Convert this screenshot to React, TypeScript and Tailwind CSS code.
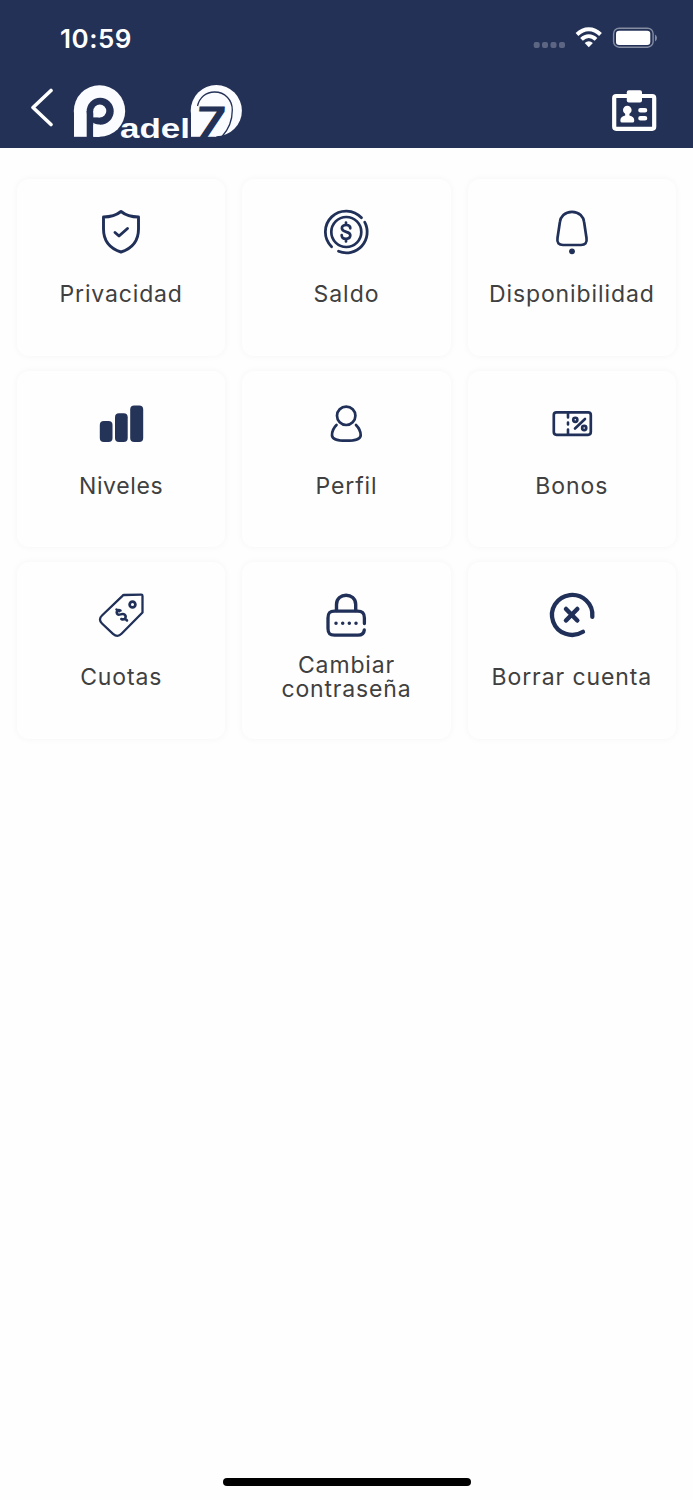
import type { ReactNode } from "react";

const Icon = ({ children }: { children: ReactNode }) => (
  <svg
    width="60"
    height="60"
    viewBox="0 0 60 60"
    fill="none"
    stroke="#203058"
    strokeWidth="2.9"
    strokeLinecap="round"
    strokeLinejoin="round"
  >
    {children}
  </svg>
);

const items: { lines: string[]; spacing: string; icon: ReactNode }[] = [
  {
    lines: ["Privacidad"],
    spacing: "tracking-[0.85px]",
    icon: (
      <>
        <path d="M30 10.5C25 14.5 20 16 12.5 16V28C12.5 39.500 19 47.500 30 51C41 47.500 47.500 39.500 47.500 28V16C40 16 35 14.500 30 10.500Z" />
        <path d="M24 31.500L28 35L36.500 27.500" />
      </>
    ),
  },
  {
    lines: ["Saldo"],
    spacing: "tracking-[1px]",
    icon: (
      <>
        <circle cx="30.300" cy="31" r="15" strokeWidth="2.700" />
        <path d="M15.600 45.700A20.800 20.800 0 1 1 45.500 16.800M48.700 21.200A20.800 20.800 0 0 1 22.500 50.300" strokeWidth="2.800" />
        <path d="M34.300 27.300C34.300 24.800 32.600 24 30.300 24C27.500 24 25.900 25 25.900 27.300C25.900 32.200 34.300 29.500 34.300 34.300C34.300 36.700 32.500 37.800 30 37.800C27.300 37.800 25.700 36.500 25.700 34.200M30 21.500V23.500M30 38V40.500" strokeWidth="2.700" />
      </>
    ),
  },
  {
    lines: ["Disponibilidad"],
    spacing: "tracking-[0.9px]",
    icon: (
      <>
        <path d="M30 10.800C22.500 10.800 18.500 16 17.900 21L15.500 37C14.700 42 17 44 21 44H39C43 44 45.300 42 44.500 37L42.100 21C41.500 16 37.500 10.800 30 10.800Z" strokeWidth="2.700" />
        <circle cx="30" cy="50.300" r="2.900" fill="#203058" stroke="none" />
      </>
    ),
  },
  {
    lines: ["Niveles"],
    spacing: "tracking-[0.65px]",
    icon: (
      <g fill="#243358" stroke="none">
        <rect x="8.800" y="28" width="12.700" height="21" rx="4" />
        <rect x="24" y="20.200" width="12.700" height="28.800" rx="4" />
        <rect x="39.200" y="12.500" width="13" height="36.500" rx="4" />
      </g>
    ),
  },
  {
    lines: ["Perfil"],
    spacing: "tracking-[0.9px]",
    icon: (
      <>
        <circle cx="30.200" cy="22.800" r="9.200" strokeWidth="2.700" />
        <path d="M20.500 32C17.400 35 16 38 16 42.200C16 46 22 47.700 30.200 47.700S44.700 46 44.700 42.200C44.700 38 43 35 40 32" strokeWidth="2.700" />
      </>
    ),
  },
  {
    lines: ["Bonos"],
    spacing: "tracking-[1px]",
    icon: (
      <>
        <rect x="11.800" y="19.300" width="37" height="22.500" rx="2.700" strokeWidth="2.700" />
        <path d="M26 20V24.500M26 29.500V31.500M26 36.500V41.500M33 35.500L43 26" strokeWidth="2.600" />
        <circle cx="33.300" cy="26.800" r="2.100" strokeWidth="2.600" />
        <circle cx="42.200" cy="35" r="2.100" strokeWidth="2.600" />
      </>
    ),
  },
  {
    lines: ["Cuotas"],
    spacing: "tracking-[0.85px]",
    icon: (
      <>
        <path d="M33 11L50.300 10.700C51.100 10.700 51.500 11.100 51.500 12V28.500L30.500 49.800C28 52.300 24.700 52.300 22 49.800L11 39.500C8.300 37 8.300 34 11 31.500L31.500 11.800Q32.200 11 33 11Z" strokeWidth="2.300" />
        <circle cx="41.500" cy="20.500" r="2.900" strokeWidth="2.700" />
        <path d="M29.500 26.500C27 25 25 27.500 26 29.700C27.500 32.500 31 28.500 33.500 30.500C36 32.500 34 36.500 30.300 35M28 27.200L25.500 25.500M34 34.500L36 36.500" strokeWidth="2.500" />
      </>
    ),
  },
  {
    lines: ["Cambiar", "contraseña"],
    spacing: "tracking-[0.85px]",
    icon: (
      <>
        <path d="M20.500 26.500V20.500C20.500 8.200 39.700 8.200 39.700 20.500V26.500" strokeWidth="3.400" />
        <path d="M48.400 39.500V34C48.400 29 46.500 27.200 41.500 27.200H18.500C13.500 27.200 12 29 12 34V44.500C12 49.500 13.500 51.200 18.500 51.200H42C46 51.200 48 49.500 48.300 46" strokeWidth="3.300" />
        <path d="M20 39.300h.01M26.700 39.300h.01M33.300 39.300h.01M40 39.300h.01" strokeWidth="3.500" />
      </>
    ),
  },
  {
    lines: ["Borrar cuenta"],
    spacing: "tracking-[0.9px]",
    icon: (
      <>
        <path d="M50.300 32.800A20.200 20 0 1 0 41 47.800" strokeWidth="4.300" />
        <path d="M24 25L35.300 36.500M35.300 25L24 36.500" strokeWidth="4.500" />
      </>
    ),
  },
];

const Logo = () => (
  <svg width="172" height="58" viewBox="72 83 172 58" className="overflow-visible">
    <circle cx="99.500" cy="111" r="25.700" fill="#fafcff" />
    <rect x="74" y="111" width="25" height="25.800" fill="#fafcff" />
    <circle cx="100.200" cy="111.200" r="13.500" fill="#243156" />
    <rect x="86.700" y="111" width="6.600" height="26" fill="#243156" />
    <circle cx="99.800" cy="111" r="6.500" fill="#fafcff" />
    <rect x="93.300" y="111" width="6.500" height="6.400" fill="#fafcff" />
    <rect x="93.300" y="124.700" width="6.500" height="12" fill="#fafcff" />
    <circle cx="216.300" cy="110.700" r="25.600" fill="#fafcff" />
    <rect x="191" y="110.700" width="25.300" height="26.100" fill="#fafcff" />
    <path
      d="M197.500 106C199.500 97.500 206 92 214.500 92C225 92 232.300 100 232.300 110C232.300 121 228 130 222 136.500"
      fill="none"
      stroke="#243156"
      strokeWidth="1.300"
    />
    <text
      x="120"
      y="137.800"
      fill="#fafcff"
      stroke="#243156"
      strokeWidth="1.600"
      paintOrder="stroke"
      fontFamily="Liberation Sans, sans-serif"
      fontWeight="700"
      fontSize="28.500"
      textLength="70"
      lengthAdjust="spacingAndGlyphs"
    >
      adel
    </text>
    <text
      transform="translate(195.500 137) skewX(-4)"
      fill="#243156"
      fontFamily="Inter, sans-serif"
      fontWeight="700"
      fontSize="42"
      textLength="29"
      lengthAdjust="spacingAndGlyphs"
    >
      7
    </text>
  </svg>
);

export default function App() {
  return (
    <div className="flex h-[1500px] w-[693px] flex-col bg-[#fefefe] font-[Inter,sans-serif]">
      <header className="h-[148px] bg-[#243156]">
        <div className="flex h-[75px] items-center justify-between pt-px pr-[35px] pl-[60px]">
          <span className="pt-px text-[26px] leading-none font-semibold tracking-[0.5px] text-white">10:59</span>
          <svg width="126" height="24" viewBox="532 26 126 24" fill="none">
            <g fill="#5c6683">
              <rect x="533.700" y="42" width="6" height="6" rx="2" />
              <rect x="542" y="42" width="6" height="6" rx="2" />
              <rect x="550.500" y="42" width="6" height="6" rx="2" />
              <rect x="559" y="42" width="6" height="6" rx="2" />
            </g>
            <path d="M577 34.500C584 27.500 593.500 27.500 600.500 34.500M581.500 39.300C586 35 591.500 35 596 39.300" stroke="#fff" strokeWidth="3.900" />
            <path d="M584.700 43Q588.800 39.500 592.900 43L588.800 47.300Z" fill="#fff" />
            <rect x="613.600" y="28.200" width="39.500" height="19" rx="5.500" stroke="#858da2" strokeWidth="1.400" />
            <rect x="616" y="30.700" width="34.300" height="14.200" rx="3.200" fill="#fff" />
            <path d="M655 34.500Q657 35.500 657 38T655 41.500Z" fill="#858da2" />
          </svg>
        </div>
        <div className="flex h-[73px] items-center pr-9 pl-[30px]">
          <svg width="24" height="40" viewBox="0.5 0.500 24 40" className="mb-[9px]" fill="none" stroke="#fff" strokeWidth="3.600" strokeLinecap="round" strokeLinejoin="round">
            <path d="M21.500 4L3.500 21L21.500 38" />
          </svg>
          <div className="ml-[18px]">
            <Logo />
          </div>
          <svg width="46" height="42" viewBox="611 90 46 42" className="mb-px ml-auto">
            <rect x="614.200" y="96" width="40" height="32.800" rx="2" fill="none" stroke="#fff" strokeWidth="4.200" />
            <rect x="626.800" y="90.300" width="15.200" height="12.300" rx="2" fill="#fff" />
            <ellipse cx="627.300" cy="110" rx="4.300" ry="4.300" fill="#fff" />
            <path d="M625.200 112H629.400V115.500Q634.200 116.700 634.200 120V121Q634.200 122.600 632.600 122.600H622Q620.400 122.600 620.400 121V120Q620.400 116.700 625.200 115.500Z" fill="#fff" />
            <path d="M640.500 110.300H645M640.500 118.300H645" stroke="#fff" strokeWidth="4.600" strokeLinecap="round" />
          </svg>
        </div>
      </header>
      <main className="grid grid-cols-3 gap-x-[17px] gap-y-[15px] px-[17px] pt-[31px]">
        {items.map(({ lines, spacing, icon }) => (
          <section
            key={lines[0]}
            className="flex h-[176.700px] flex-col items-center rounded-[12px] bg-[#fefefe] pt-[22px] shadow-[0_0_6px_1px_rgba(0,0,0,0.03)]"
          >
            <Icon>{icon}</Icon>
            <div className={`mt-[3px] flex h-[60px] flex-col justify-center text-center text-[23px] leading-[24px] font-[380] text-[#404040] ${spacing}`}>
              {lines.map((line) => (
                <span key={line} className="whitespace-nowrap">{line}</span>
              ))}
            </div>
          </section>
        ))}
      </main>
      <footer className="mt-auto flex justify-center pb-[14px]">
        <div className="h-[8px] w-[248px] rounded-full bg-black" />
      </footer>
    </div>
  );
}
